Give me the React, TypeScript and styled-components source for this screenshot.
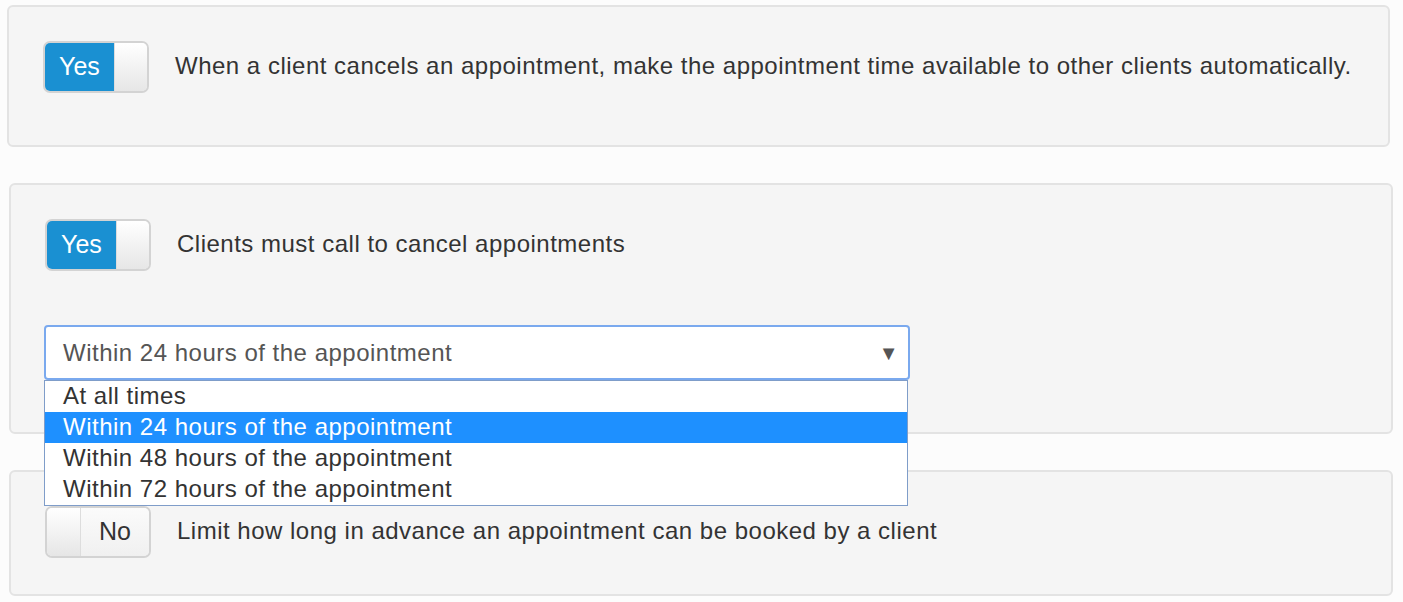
import React from "react";
import styled, { createGlobalStyle } from "styled-components";

const Global = createGlobalStyle`
  html, body { margin: 0; padding: 0; background: #fcfcfc; }
  body { font-family: "Liberation Sans", Arial, sans-serif; color: #333; }
`;

const Page = styled.div`
  display: flex;
  flex-direction: column;
  gap: 36px;
  padding-top: 5px;
  width: 1403px;
  height: 602px;
  overflow: hidden;
  box-sizing: border-box;
`;

const Panel = styled.section<{ $left: number; $right: number; $bottom: number; $z?: number }>`
  position: relative;
  z-index: ${(p) => p.$z ?? 0};
  margin-left: ${(p) => p.$left}px;
  margin-right: ${(p) => p.$right}px;
  padding: 34px 34px ${(p) => p.$bottom}px 34px;
  background: #f5f5f5;
  border: 2px solid #e3e3e3;
  border-radius: 6px;
  display: flex;
  flex-direction: column;
  gap: 54px;
`;

const Row = styled.div`
  display: flex;
  align-items: center;
  gap: 26px;
`;

const Label = styled.span`
  font-size: 24px;
  letter-spacing: 0.5px;
  color: #333;
  line-height: 30px;
  margin-top: -3px;
  white-space: nowrap;
`;

const Switch = styled.div`
  display: flex;
  width: 106px;
  height: 52px;
  box-sizing: border-box;
  border: 2px solid #d3d3d3;
  border-radius: 7px;
  overflow: hidden;
  flex-shrink: 0;
`;

const OnPart = styled.div`
  width: 71px;
  background: #1a90d2;
  color: #fff;
  font-size: 25px;
  display: flex;
  align-items: center;
  justify-content: center;
  padding-bottom: 2px;
  box-sizing: border-box;
`;

const OffPart = styled.div`
  flex: 1;
  background: linear-gradient(#fbfbfb, #f0f0f0);
  color: #333;
  font-size: 25px;
  display: flex;
  align-items: center;
  justify-content: center;
  padding-bottom: 2px;
  box-sizing: border-box;
`;

const Handle = styled.div<{ $side: "left" | "right" }>`
  width: 33px;
  background: linear-gradient(to bottom, #ffffff, #e6e6e6);
  ${(p) => (p.$side === "left" ? "border-right: 1px solid #ddd;" : "border-left: 1px solid #ddd;")}
`;

const SelectWrap = styled.div`
  position: relative;
  width: 866px;
  margin-left: -1px;
`;

const SelectBox = styled.div`
  height: 55px;
  box-sizing: border-box;
  background: #fff;
  border: 2px solid #7aa9ee;
  border-radius: 4px;
  display: flex;
  align-items: center;
  justify-content: space-between;
  padding: 0 9px 0 17px;
  font-size: 24px;
  letter-spacing: 0.5px;
  color: #555;
`;

const Arrow = styled.span`
  font-size: 20px;
  color: #555;
  line-height: 1;
`;

const Menu = styled.ul`
  position: absolute;
  top: 55px;
  left: 0;
  width: 864px;
  margin: 0;
  padding: 0;
  list-style: none;
  background: #fff;
  border: 1px solid #7f9dc9;
  box-sizing: border-box;
  z-index: 5;
`;

const Option = styled.li<{ $active?: boolean }>`
  height: 31px;
  line-height: 30px;
  padding-left: 18px;
  font-size: 24px;
  letter-spacing: 0.5px;
  color: ${(p) => (p.$active ? "#fff" : "#333")};
  background: ${(p) => (p.$active ? "#1e90ff" : "#fff")};
`;

const YesSwitch = () => (
  <Switch>
    <OnPart>Yes</OnPart>
    <Handle $side="right" />
  </Switch>
);

const NoSwitch = () => (
  <Switch>
    <Handle $side="left" />
    <OffPart>No</OffPart>
  </Switch>
);

export default function App() {
  const options = [
    "At all times",
    "Within 24 hours of the appointment",
    "Within 48 hours of the appointment",
    "Within 72 hours of the appointment",
  ];
  return (
    <>
      <Global />
      <Page>
        <Panel $left={7} $right={13} $bottom={52}>
          <Row>
            <YesSwitch />
            <Label>
              When a client cancels an appointment, make the appointment time available to other clients automatically.
            </Label>
          </Row>
        </Panel>
        <Panel $left={9} $right={10} $bottom={52} $z={2}>
          <Row>
            <YesSwitch />
            <Label>Clients must call to cancel appointments</Label>
          </Row>
          <SelectWrap>
            <SelectBox>
              <span>Within 24 hours of the appointment</span>
              <Arrow>▼</Arrow>
            </SelectBox>
            <Menu>
              {options.map((o, i) => (
                <Option key={o} $active={i === 1}>
                  {o}
                </Option>
              ))}
            </Menu>
          </SelectWrap>
        </Panel>
        <Panel $left={9} $right={10} $bottom={36}>
          <Row>
            <NoSwitch />
            <Label>Limit how long in advance an appointment can be booked by a client</Label>
          </Row>
        </Panel>
      </Page>
    </>
  );
}
